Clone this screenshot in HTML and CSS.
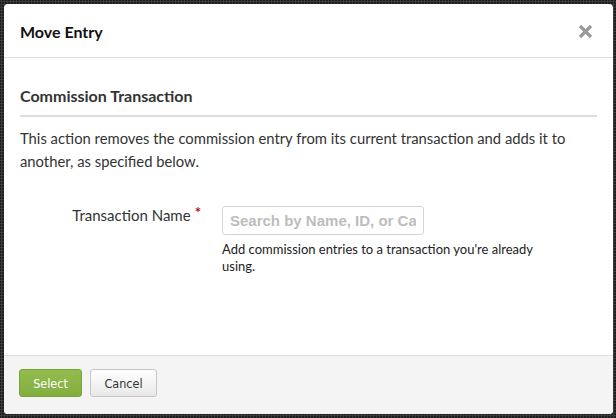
FILE: index.html
```html
<!DOCTYPE html>
<html>
<head>
<meta charset="utf-8">
<link rel="stylesheet" href="styles.css">
</head>
<body>
<div class="backdrop">
  <div class="modal">
    <div class="modal-header">
      <h1 class="modal-title">Move Entry</h1>
      <svg class="close" width="15" height="15" viewBox="0 0 15 15" aria-label="Close">
        <path d="M2 2 L13 13 M13 2 L2 13" stroke="#9a9a9a" stroke-width="3.2" stroke-linecap="butt" fill="none"/>
      </svg>
    </div>
    <div class="modal-body">
      <h2 class="section-title">Commission Transaction</h2>
      <p class="desc">This action removes the commission entry from its current transaction and adds it to another, as specified below.</p>
      <div class="field">
        <label class="field-label">Transaction Name<span class="req">*</span></label>
        <div class="field-control">
          <input class="search" type="text" placeholder="Search by Name, ID, or Category">
          <div class="help">Add commission entries to a transaction you're already using.</div>
        </div>
      </div>
    </div>
    <div class="modal-footer">
      <button class="btn btn-primary">Select</button>
      <button class="btn btn-default">Cancel</button>
    </div>
  </div>
</div>
</body>
</html>
```
FILE: styles.css
```css
html, body {
  margin: 0;
  padding: 0;
  height: 100%;
}
body {
  background-color: #1e1e1e;
  background-image: radial-gradient(#3a3a3a 1px, transparent 1.2px);
  background-size: 3px 3px;
  font-family: "Source Sans Pro", "Lato", "Liberation Sans", sans-serif;
  color: #333;
}
.backdrop {
  padding: 4px 3px 4px 4px;
  height: 100%;
  box-sizing: border-box;
}
.modal {
  background: #fff;
  border-radius: 4px;
  height: 410px;
  display: flex;
  flex-direction: column;
  overflow: hidden;
}
.modal-header {
  height: 53px;
  border-bottom: 1px solid #dcdcdc;
  display: flex;
  align-items: center;
  justify-content: space-between;
  padding: 0 20px 0 16px;
}
.modal-title {
  margin: 0;
  font-size: 16px;
  font-weight: bold;
  color: #111;
  padding-top: 1px;
}
.close {
  display: block;
  margin-top: 1px;
}
.modal-body {
  flex: 1;
  padding: 0 16px;
}
.section-title {
  margin: 28px 0 0;
  font-size: 16px;
  font-weight: bold;
  color: #333;
  padding-bottom: 9px;
  border-bottom: 2px solid #dedede;
  line-height: 20px;
}
.desc {
  margin: 10px 0 0;
  font-size: 14.8px;
  line-height: 22.5px;
  color: #333;
}
.field {
  display: flex;
  margin-top: 34px;
}
.field-label {
  width: 181px;
  text-align: right;
  font-size: 15px;
  padding-top: 0;
  color: #333;
}
.req {
  color: #b22222;
  font-weight: bold;
  margin-left: 4px;
  position: relative;
  top: -3px;
}
.field-control {
  margin-left: 21px;
  width: 320px;
}
.search {
  display: block;
  width: 202px;
  height: 29px;
  box-sizing: border-box;
  border: 1px solid #d4d4d4;
  border-radius: 3px;
  padding: 0 7px;
  font-family: "Liberation Sans", Arial, sans-serif;
  font-size: 15px;
  font-weight: bold;
  outline: none;
}
.search::placeholder {
  color: #bdbdbd;
}
.help {
  margin-top: 6px;
  font-size: 13px;
  line-height: 17px;
  color: #222;
}
.modal-footer {
  height: 59px;
  border-top: 1px solid #dcdcdc;
  background: #f4f4f4;
  display: flex;
  align-items: center;
  gap: 8px;
  padding: 0 15px 4px;
  box-sizing: border-box;
}
.btn {
  height: 28px;
  border-radius: 3px;
  font-family: "DejaVu Sans Condensed", "Liberation Sans", sans-serif;
  font-size: 12.5px;
  padding: 0;
  cursor: pointer;
}
.btn-primary {
  background: linear-gradient(#93bd4e, #82ad3f);
  border: 1px solid #77a23a;
  color: #fff;
  width: 63px;
}
.btn-default {
  background: linear-gradient(#ffffff, #e8e8e8);
  border: 1px solid #c6c6c6;
  color: #333;
  width: 67px;
}
```
